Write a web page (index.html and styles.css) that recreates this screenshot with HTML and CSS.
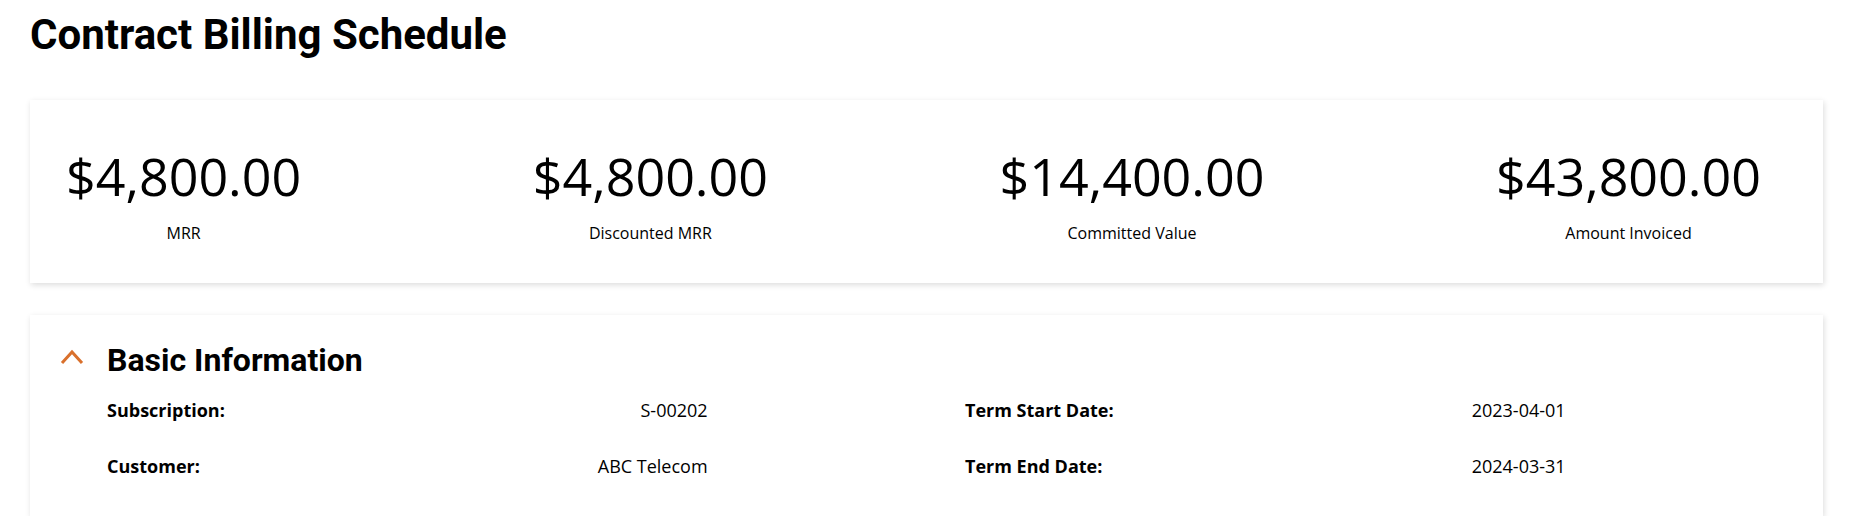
FILE: index.html
```html
<!DOCTYPE html>
<html lang="en">
<head>
  <meta charset="UTF-8">
  <meta name="viewport" content="width=device-width, initial-scale=1.0">
  <title>Contract Billing Schedule</title>
  <link rel="stylesheet" href="styles.css">
</head>
<body>

<div class="page">
  <h1>Contract Billing Schedule</h1>

  <div class="card stats">
    <div class="stat">
      <div class="stat-value">$4,800.00</div>
      <div class="stat-label">MRR</div>
    </div>
    <div class="stat">
      <div class="stat-value">$4,800.00</div>
      <div class="stat-label">Discounted MRR</div>
    </div>
    <div class="stat">
      <div class="stat-value">$14,400.00</div>
      <div class="stat-label">Committed Value</div>
    </div>
    <div class="stat">
      <div class="stat-value">$43,800.00</div>
      <div class="stat-label">Amount Invoiced</div>
    </div>
  </div>

  <div class="card section">
    <div class="section-header">
      <svg class="chevron" width="26" height="18" viewBox="0 0 26 18">
        <polyline points="3,15 13,4 23,15" fill="none" stroke="#d9702c" stroke-width="3"/>
      </svg>
      <h2>Basic Information</h2>
    </div>
    <div class="info-grid">
      <div class="info-pair">
        <span class="info-label">Subscription:</span>
        <span class="info-value">S-00202</span>
      </div>
      <div class="info-pair">
        <span class="info-label">Term Start Date:</span>
        <span class="info-value">2023-04-01</span>
      </div>
      <div class="info-pair">
        <span class="info-label">Customer:</span>
        <span class="info-value">ABC Telecom</span>
      </div>
      <div class="info-pair">
        <span class="info-label">Term End Date:</span>
        <span class="info-value">2024-03-31</span>
      </div>
    </div>
  </div>
</div>

</body>
</html>
```

FILE: styles.css
```css
body {
  font-family: "Open Sans", "Noto Sans", sans-serif;
  background-color: #fff;
  color: #000;
  margin: 0;
}
.page {
  padding: 11px 41px 0 30px;
}
h1 {
  font-family: Roboto, sans-serif;
  font-size: 42px;
  font-weight: 700;
  line-height: 48px;
  margin: 0 0 41px 0;
}
.card {
  background-color: white;
  box-shadow: 1px 2px 6px rgba(0, 0, 0, 0.14);
}
.stats {
  display: flex;
  justify-content: space-between;
  padding: 44px 62px 40px 36px;
}
.stat {
  display: flex;
  flex-direction: column;
  align-items: center;
}
.stat-value {
  font-size: 52px;
  line-height: 64px;
}
.stat-label {
  font-size: 16px;
  font-weight: 500;
  line-height: 20px;
  margin-top: 15px;
}
.section {
  margin-top: 32px;
  padding: 27px 0 38px 29px;
}
.section-header {
  display: flex;
  align-items: center;
  gap: 22px;
}
.chevron {
  margin-top: -6px;
}
h2 {
  font-family: Roboto, sans-serif;
  font-size: 32px;
  font-weight: 700;
  line-height: 36px;
  margin: 0;
}
.info-grid {
  display: grid;
  grid-template-columns: 1fr 1fr;
  row-gap: 32px;
  margin-top: 20px;
  padding-left: 48px;
  font-size: 18px;
  line-height: 24px;
}
.info-pair {
  display: flex;
  justify-content: space-between;
  width: 70%;
}
.info-label {
  font-weight: 700;
}
```
